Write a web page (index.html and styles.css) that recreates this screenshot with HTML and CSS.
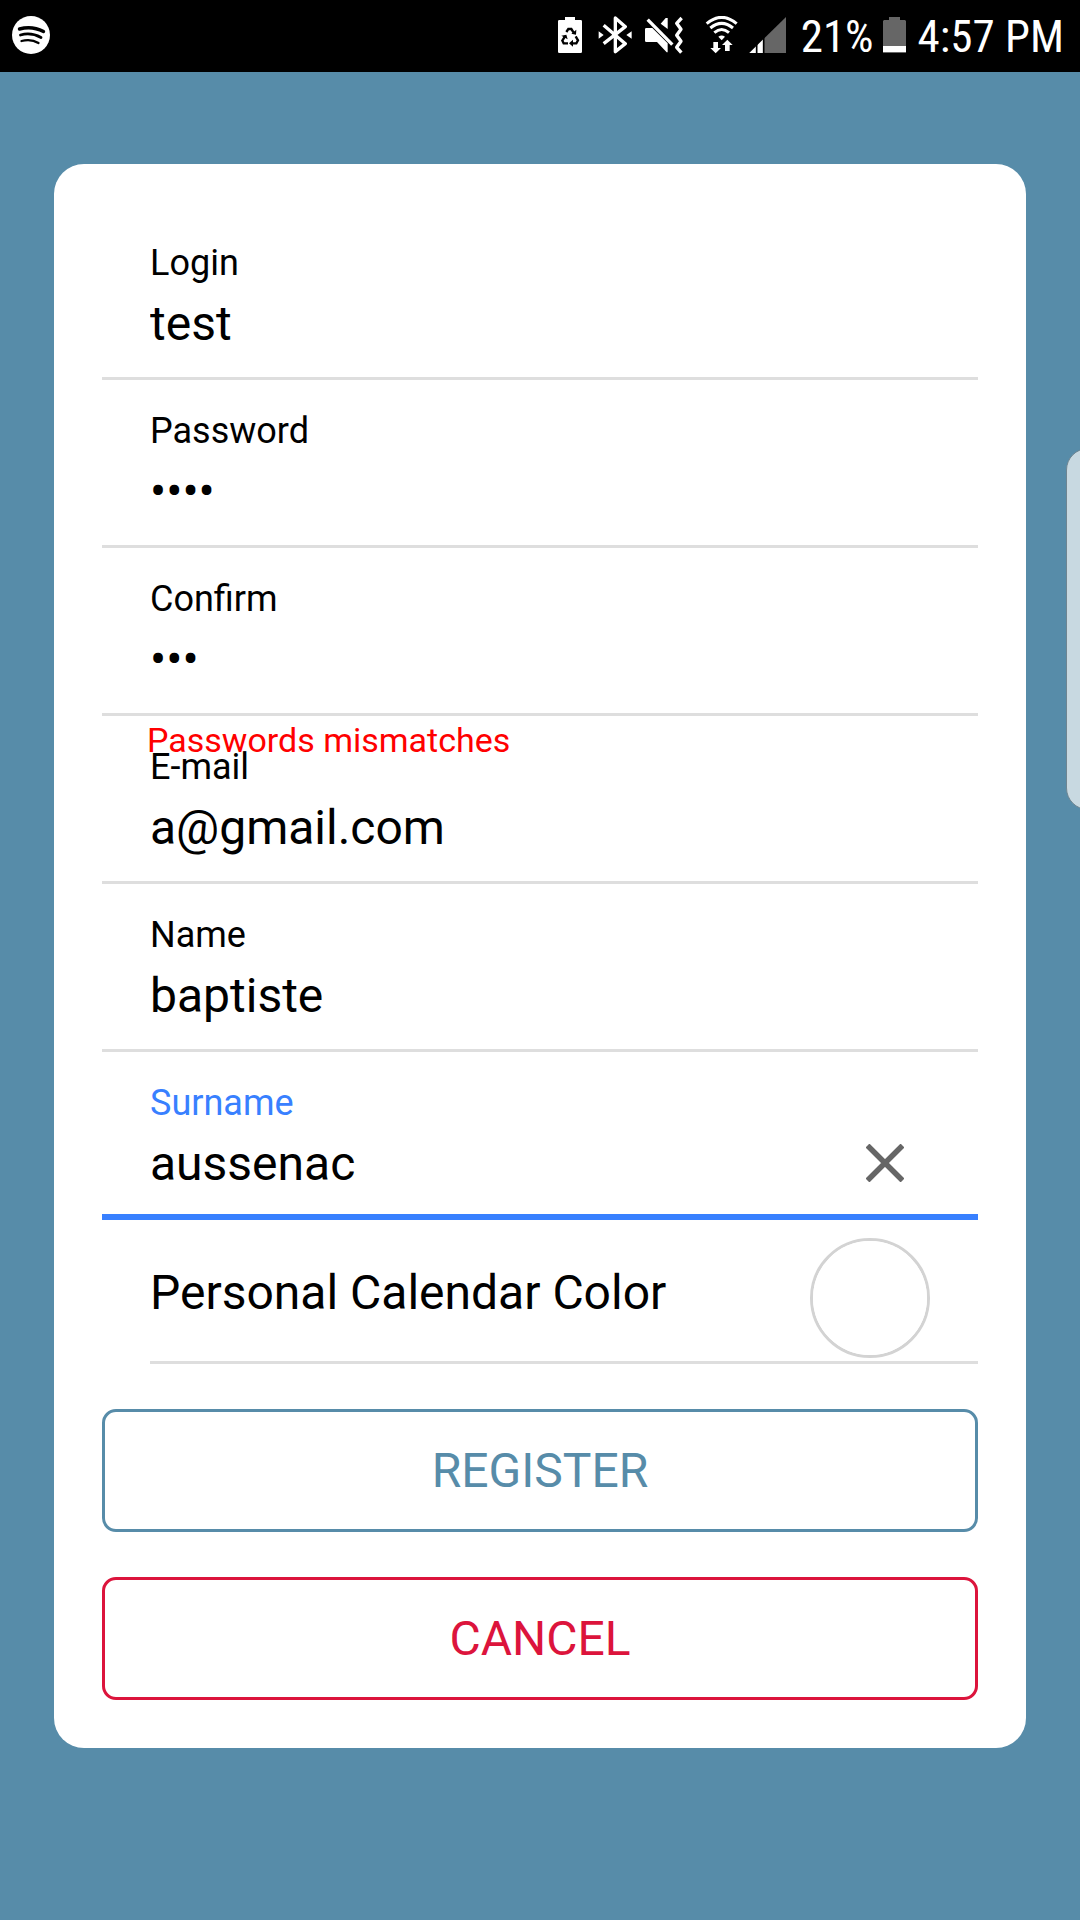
FILE: index.html
```html
<!DOCTYPE html>
<html lang="en">
<head>
  <meta charset="utf-8">
  <meta name="viewport" content="width=device-width, initial-scale=1">
  <title>Register</title>
  <link rel="stylesheet" href="styles.css">
</head>
<body>
  <header class="status-bar">
    <svg class="spotify" viewBox="0 0 38 38" width="38" height="38" aria-hidden="true">
      <circle cx="19" cy="19" r="19" fill="#fff"/>
      <g fill="none" stroke="#000" stroke-linecap="round">
        <path d="M7.500 13 Q20 9.500 31.500 15.500" stroke-width="3.400"/>
        <path d="M8.500 19 Q19 16 29 21.500" stroke-width="2.800"/>
        <path d="M9.500 25 Q19 22.500 26.500 27" stroke-width="2.300"/>
      </g>
    </svg>
    <div class="status-items">
      <svg viewBox="54 48 84 114" width="28" height="38" aria-hidden="true">
        <path d="M75 51H105V60H122Q126 60 126 64V155Q126 159 122 159H58Q54 159 54 155V64Q54 60 58 60H75Z" fill="#fff"/>
        <g fill="none" stroke="#000" stroke-width="7">
          <path d="M79 96L85 87H94L101 98"/>
          <path d="M107 109L114 121L109 130H94"/>
          <path d="M84 130H71L67 122L75 109"/>
        </g>
        <path d="M94 101L108 104L109 89ZM99 119V140L87 130ZM64 107L79 104L83 118Z" fill="#000"/>
      </svg>
      <svg viewBox="165 48 120 114" width="40" height="38" aria-hidden="true">
        <path d="M191 76L256 131L226 155V54L256 80L191 131" fill="none" stroke="#fff" stroke-width="10" stroke-linejoin="round"/>
        <path d="M176 94L191 105L176 116ZM275 94L259 105L275 116Z" fill="#fff"/>
      </svg>
      <svg viewBox="312 48 138 114" width="46" height="38" aria-hidden="true">
        <path d="M362 71L377 54H383V87Z" fill="#fff"/>
        <path d="M319 84H337L383 130V157H380L351 126H319Q315 126 315 122V88Q315 84 319 84Z" fill="#fff"/>
        <path d="M323 59L397 134" fill="none" stroke="#fff" stroke-width="10"/>
        <path d="M425 54L410 70L423 88L410 106L423 124L410 142L424 158" fill="none" stroke="#fff" stroke-width="10" stroke-linejoin="round"/>
      </svg>
      <svg viewBox="477 48 123 114" width="41" height="38" aria-hidden="true">
        <g fill="none" stroke="#fff" stroke-width="9">
          <path d="M500 71Q545 33 590 71"/>
          <path d="M511 84Q545 56 579 84"/>
          <path d="M523 98Q545 79 567 98"/>
        </g>
        <path d="M535 110Q545 103 555 110L545 121Z" fill="#fff"/>
        <path d="M520 126H534V144H543L527 160L511 144H520Z" fill="#fff"/>
        <path d="M555 153V135H546L562 119L578 135H569V153Z" fill="#fff"/>
      </svg>
      <svg viewBox="627 48 123 114" width="41" height="38" aria-hidden="true">
        <path d="M628 159L738 51V159Z" fill="#666"/>
        <path d="M628 159L670 118V159Z" fill="#fff"/>
        <path d="M650 130V160M671 110V160" stroke="#000" stroke-width="5"/>
      </svg>
      <span class="status-text charge">21%</span>
      <svg viewBox="0 0 23 38" width="23" height="38" aria-hidden="true">
        <path d="M6 1H17V4H22L23 5V37H0V5L1 4H6Z" fill="#666"/>
        <path d="M0 30H23V36H0Z" fill="#fff"/>
      </svg>
      <time class="status-text clock">4:57 PM</time>
    </div>
  </header>

  <main class="page">
    <form class="card">
      <div class="field">
        <div class="field-body">
          <label for="login">Login</label>
          <input id="login" type="text" value="test">
        </div>
      </div>
      <div class="field">
        <div class="field-body">
          <label for="password">Password</label>
          <input id="password" type="password" value="test">
        </div>
      </div>
      <div class="field">
        <div class="field-body">
          <label for="confirm">Confirm</label>
          <input id="confirm" type="password" value="tes" aria-describedby="mismatch">
        </div>
        <span class="error" id="mismatch">Passwords mismatches</span>
      </div>
      <div class="field">
        <div class="field-body">
          <label for="email">E-mail</label>
          <input id="email" type="email" value="a@gmail.com">
        </div>
      </div>
      <div class="field">
        <div class="field-body">
          <label for="name">Name</label>
          <input id="name" type="text" value="baptiste">
        </div>
      </div>
      <div class="field field-active">
        <div class="field-body">
          <label for="surname">Surname</label>
          <input id="surname" type="text" value="aussenac">
        </div>
        <button class="clear" type="button" aria-label="Clear surname">
          <svg viewBox="0 0 38 38" width="38" height="38" aria-hidden="true">
            <path d="M1.500 1.500L36.500 36.500M36.500 1.500L1.500 36.500" stroke="#666" stroke-width="5.500"/>
          </svg>
        </button>
      </div>
      <div class="color-row">
        <label for="color">Personal Calendar Color</label>
        <input id="color" class="swatch" type="color" value="#ffffff">
      </div>
      <div class="actions">
        <button class="action register" type="submit">REGISTER</button>
        <button class="action cancel" type="button">CANCEL</button>
      </div>
    </form>
  </main>
  <div class="edge-handle"></div>
</body>
</html>
```
FILE: styles.css
```css
* {
  box-sizing: border-box;
}

body {
  margin: 0;
  min-height: 100vh;
  position: relative;
  background: #578ca9;
  color: #000;
  font-family: Roboto, "Liberation Sans", sans-serif;
  font-size: 48px;
  line-height: 56px;
}

input,
button {
  margin: 0;
  padding: 0;
  border: 0;
  background: transparent;
  color: inherit;
  font: inherit;
  outline: none;
}

svg {
  display: block;
  flex: none;
}

.status-bar {
  display: flex;
  align-items: center;
  justify-content: space-between;
  height: 72px;
  padding: 0 16px 2px 12px;
  background: #000;
  color: #fff;
}

.status-items {
  display: flex;
  align-items: center;
  gap: 9px;
}

.status-text {
  padding-top: 4px;
  font-family: "Roboto Condensed", "Liberation Sans Narrow", Roboto, sans-serif;
  font-size: 45px;
  white-space: nowrap;
}

.charge {
  margin-left: 2px;
}

.clock {
  margin-left: 3px;
}

.page {
  padding: 92px 54px;
}

.card {
  padding: 48px;
  border-radius: 30px;
  background: #fff;
}

.field {
  position: relative;
  display: flex;
  height: 168px;
  padding: 30px 48px 0;
  border-bottom: 3px solid #dedede;
}

.field-body {
  display: flex;
  flex: 1;
  flex-direction: column;
  gap: 12px;
  min-width: 0;
}

.field label {
  font-size: 36px;
  line-height: 42px;
}

.field input {
  width: 100%;
  height: 56px;
}

.field-active {
  border-bottom: 6px solid #3880ff;
}

.field-active label {
  color: #3880ff;
}

.error {
  position: absolute;
  top: 100%;
  left: 45px;
  margin-top: 7px;
  color: #f00;
  font-size: 34px;
  line-height: 40px;
}

.clear {
  display: flex;
  align-items: center;
  justify-content: center;
  width: 90px;
  height: 90px;
  margin-top: 36px;
}

.color-row {
  display: flex;
  justify-content: space-between;
  margin-left: 48px;
  padding: 18px 48px 3px 0;
  border-bottom: 3px solid #dedede;
}

.color-row label {
  line-height: 110px;
}

.swatch {
  appearance: none;
  width: 120px;
  height: 120px;
  border: 3px solid #d3d3d3;
  border-radius: 50%;
  overflow: hidden;
}

.swatch::-webkit-color-swatch-wrapper {
  padding: 0;
}

.swatch::-webkit-color-swatch {
  border: 0;
}

.actions {
  display: flex;
  flex-direction: column;
  gap: 45px;
  margin-top: 45px;
}

.action {
  height: 123px;
  border: 3px solid;
  border-radius: 14px;
}

.register {
  color: #578ca9;
}

.cancel {
  color: #dc143c;
}

.edge-handle {
  position: absolute;
  top: 448px;
  right: 0;
  width: 14px;
  height: 360px;
  overflow: hidden;
}

.edge-handle::before {
  content: "";
  display: block;
  width: 44px;
  height: 100%;
  border: 1px solid #6f8591;
  border-radius: 22px;
  background: #c8d9e1;
}
```
